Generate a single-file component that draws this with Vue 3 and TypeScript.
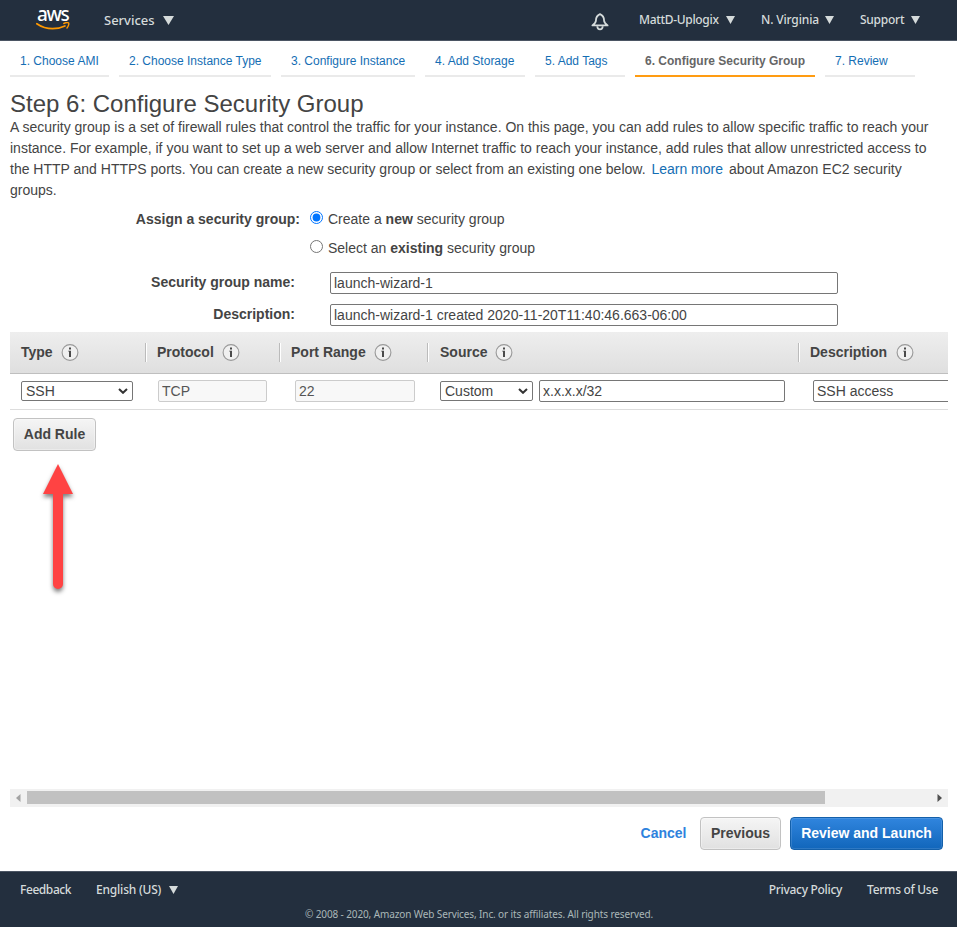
<script setup lang="ts">
import { ref } from 'vue'

interface Tab { label: string; cls: string; active?: boolean }
const tabs: Tab[] = [
  { label: '1. Choose AMI', cls: 't1' },
  { label: '2. Choose Instance Type', cls: 't2' },
  { label: '3. Configure Instance', cls: 't3' },
  { label: '4. Add Storage', cls: 't4' },
  { label: '5. Add Tags', cls: 't5' },
  { label: '6. Configure Security Group', cls: 't6', active: true },
  { label: '7. Review', cls: 't7' },
]
const columns: string[] = ['Type', 'Protocol', 'Port Range', 'Source', 'Description']
const mode = ref<'new' | 'existing'>('new')
const groupName = ref('launch-wizard-1')
const description = ref('launch-wizard-1 created 2020-11-20T11:40:46.663-06:00')
const source = ref('x.x.x.x/32')
const ruleDescription = ref('SSH access')
</script>

<template>
  <div class="page">
    <header class="topbar">
      <div class="logo">
        <span class="logo-text">aws</span>
        <svg class="smile" width="34" height="9" viewBox="0 0 34 9">
          <path d="M.8 1.700C5.500 4.900 10.800 6.700 16.500 6.700c4.300 0 8.800-.9 12.400-2.700" fill="none" stroke="#f90" stroke-width="1.700" stroke-linecap="round" />
          <path d="M27.800 1.500c1.800-.9 4.200-1 4.800-.5.500.6-.1 3.400-1.600 4.900" fill="none" stroke="#f90" stroke-width="1.400" stroke-linecap="round" />
        </svg>
      </div>
      <a class="services"><span>Services</span><svg width="11" height="9" viewBox="0 0 11 9"><path d="M0 0h11L5.500 9z" /></svg></a>
      <svg class="bell" width="18" height="18" viewBox="0 0 18 18" fill="none" stroke="#d5dbdb" stroke-width="1.800">
        <path d="M9 1.200C6.200 2.300 4.900 4.700 4.900 7.800c0 1.700-1.100 2.800-3.500 4.600h15.200c-2.400-1.800-3.500-2.900-3.500-4.600 0-3.100-1.300-5.500-4.100-6.600z" stroke-linejoin="round" />
        <path d="M6.300 13.200c.2 4.200 5.200 4.200 5.400 0" />
      </svg>
      <a class="account"><span>MattD-Uplogix</span><svg width="9" height="8" viewBox="0 0 9 8"><path d="M0 0h9L4.500 8z" /></svg></a>
      <a class="region"><span>N. Virginia</span><svg width="9" height="8" viewBox="0 0 9 8"><path d="M0 0h9L4.500 8z" /></svg></a>
      <a class="support"><span>Support</span><svg width="9" height="8" viewBox="0 0 9 8"><path d="M0 0h9L4.500 8z" /></svg></a>
    </header>

    <nav class="tabs">
      <a v-for="t in tabs" :key="t.label" :class="['tab', t.cls, { active: t.active }]">{{ t.label }}</a>
    </nav>

    <main class="content">
      <h1>Step 6: Configure Security Group</h1>
      <p class="intro">
        <span class="l1">A security group is a set of firewall rules that control the traffic for your instance. On this page, you can add rules to allow specific traffic to reach your</span>
        <span class="l2">instance. For example, if you want to set up a web server and allow Internet traffic to reach your instance, add rules that allow unrestricted access to</span>
        <span class="l3">the HTTP and HTTPS ports. You can create a new security group or select from an existing one below. <a>Learn more</a> about Amazon EC2 security</span>
        <span class="l4">groups.</span>
      </p>

      <div class="form">
        <div class="assign">
          <span class="label">Assign a security group:</span>
          <div class="radios">
            <label><input v-model="mode" type="radio" value="new"><span>Create a <b>new</b> security group</span></label>
            <label><input v-model="mode" type="radio" value="existing"><span>Select an <b>existing</b> security group</span></label>
          </div>
        </div>
        <div class="field">
          <span class="label">Security group name:</span>
          <input v-model="groupName" class="text" type="text">
        </div>
        <div class="field">
          <span class="label">Description:</span>
          <input v-model="description" class="text" type="text">
        </div>
      </div>

      <section class="rules">
        <div class="head">
          <div v-for="c in columns" :key="c" class="th">
            <span>{{ c }}</span>
            <svg width="18" height="18" viewBox="0 0 18 18">
              <circle cx="9" cy="9.500" r="7.900" fill="#f0f0f0" stroke="#999" stroke-width="1.100" />
              <path d="M8 4.500h2v2H8zM7.200 7.700H10V14H8V8.600h-.8z" fill="#4a4a4a" />
            </svg>
          </div>
        </div>
        <div class="row">
          <div class="select type"><span>SSH</span><svg width="10" height="6" viewBox="0 0 10 6"><path d="M1 1l4 3.800L9 1" /></svg></div>
          <input class="text protocol" type="text" value="TCP" disabled>
          <input class="text port" type="text" value="22" disabled>
          <div class="select origin"><span>Custom</span><svg width="10" height="6" viewBox="0 0 10 6"><path d="M1 1l4 3.800L9 1" /></svg></div>
          <input v-model="source" class="text source" type="text">
          <input v-model="ruleDescription" class="text desc" type="text">
        </div>
        <button class="btn add">Add Rule</button>
        <svg class="arrow" width="50" height="150" viewBox="0 0 50 150">
          <path d="M25 9L40 39H30v90a5 5 0 0 1-10 0V39H10z" fill="#ff4343" />
        </svg>
      </section>

      <div class="scrollbar">
        <svg width="5" height="8" viewBox="0 0 5 8"><path d="M4.500 0v8L0 4z" fill="#a3a3a3" /></svg>
        <div class="thumb"></div>
        <svg class="right" width="5" height="8" viewBox="0 0 5 8"><path d="M.5 0v8L5 4z" fill="#505050" /></svg>
      </div>

      <div class="actions">
        <a class="cancel">Cancel</a>
        <button class="btn previous">Previous</button>
        <button class="btn primary">Review and Launch</button>
      </div>
    </main>

    <footer class="footer">
      <div class="links">
        <a class="feedback">Feedback</a>
        <a class="language"><span>English (US)</span><svg width="9" height="8" viewBox="0 0 9 8"><path d="M0 0h9L4.500 8z" /></svg></a>
        <a class="privacy">Privacy Policy</a>
        <a class="terms">Terms of Use</a>
      </div>
      <div class="copyright">© 2008 - 2020, Amazon Web Services, Inc. or its affiliates. All rights reserved.</div>
    </footer>
  </div>
</template>

<style>
body { margin: 0; background: #fff; }
</style>

<style scoped>
* { box-sizing: border-box; }
.page { width: 957px; height: 927px; display: flex; flex-direction: column; overflow: hidden; background: #fff; color: #444; font: 14px/21px "Liberation Sans", Arial, sans-serif; }
svg { display: block; flex: none; }
.topbar, .footer { background: #232f3e; color: #d5dbdb; font-family: "Noto Sans", sans-serif; font-weight: 500; }
.topbar { height: 41px; flex: none; display: flex; border-bottom: 1px solid #4b5563; padding-left: 36px; font-size: 12px; line-height: 40px; }
.topbar a, .language { display: flex; align-items: center; white-space: nowrap; }
.topbar a svg, .language svg { fill: #d5dbdb; }
.logo { width: 68px; padding-top: 4px; color: #fff; }
.logo-text { display: block; height: 17px; padding-left: 1px; font: 500 19px/20px "Noto Sans", sans-serif; letter-spacing: -1.300px; }
.smile { margin-top: 1px; }
.services { width: 488px; font-size: 13px; }
.services span { width: 59px; letter-spacing: 0; }
.bell { margin: 13px 30px 0 -1px; }
.account { width: 122px; letter-spacing: -.32px; }
.account span { width: 87px; }
.region { width: 99px; letter-spacing: -.15px; }
.region span { width: 64px; }
.support { letter-spacing: -.25px; }
.support span { width: 51px; }

.tabs { height: 36px; flex: none; display: flex; gap: 10px; padding-left: 10px; font-size: 12px; line-height: 40px; }
.tab { height: 36px; padding-left: 10px; border-bottom: 2px solid #eaeaea; color: #146eb4; white-space: nowrap; }
.tab.active { border-color: #ff9c12; color: #666; font-weight: bold; }
.t1 { width: 99px; }
.t2 { width: 152px; }
.t3 { width: 134px; }
.t4 { width: 100px; }
.t5 { width: 90px; }
.t6 { width: 180px; }
.t7 { width: 90px; }

.content { height: 794px; flex: none; padding: 14px 9px 0 10px; }
h1 { margin: 0 0 1px; font-size: 24px; line-height: 25px; font-weight: normal; }
.intro { margin: 0; height: 84px; }
.intro span { display: block; width: max-content; white-space: nowrap; }
.intro a { color: #146eb4; margin: 0 2px; }
.label { font-weight: bold; text-align: right; white-space: nowrap; }
.assign { display: flex; gap: 10px; padding-top: 8px; }
.assign .label { width: 290px; }
.radios { display: flex; flex-direction: column; gap: 8px; }
.radios label { height: 21px; display: flex; gap: 5px; }
.radios input { width: 13px; height: 13px; margin: 2px 0 0; }
.radios span { white-space: nowrap; }
.field { display: flex; height: 22px; margin-bottom: 10px; gap: 35px; }
.assign + .field { margin-top: 13px; }
.field .label { width: 285px; }
.field .text { width: 508px; }
.text { height: 22px; margin: 0; padding: 0 3px; border: 1px solid #767676; border-radius: 2px; background: #fff; color: #444; font: inherit; outline: 0; }
.text:disabled { background: #f8f8f8; border-color: #ccc; color: #555; }

.rules { height: 457px; margin-top: -4px; width: 938px; overflow: hidden; position: relative; }
.head { display: grid; grid-template-columns: 137px 134px 148px 371px 1fr; height: 42px; border-bottom: 1px solid #bfbfbf; background: linear-gradient(#eee, #dfdfdf); }
.th { height: 19px; margin-top: 11px; display: flex; align-items: flex-start; gap: 8.500px; padding-left: 10px; border-right: 1px solid #fff; box-shadow: inset -1px 0 #bbb; font-weight: bold; line-height: 19px; white-space: nowrap; }
.th:first-child { padding-left: 11px; gap: 8px; }
.th:nth-child(4) { padding-left: 11px; gap: 7.500px; }
.th:last-child { border: 0; box-shadow: none; }
.row { height: 36px; display: flex; align-items: center; padding: 0 0 2px 11px; border-bottom: 1px solid #ddd; }
.row > * { flex: none; }
.select { height: 20px; display: flex; align-items: center; justify-content: space-between; border: 1px solid #767676; border-radius: 2px; padding: 0 4px; line-height: 18px; }
.select path { fill: none; stroke: #333; stroke-width: 2; }
.type { width: 112px; margin-right: 25px; }
.protocol { width: 109px; margin-right: 28px; }
.port { width: 120px; margin-right: 25px; }
.origin { width: 93px; margin-right: 6px; }
.source { width: 246px; margin-right: 28px; }
.desc { width: 240px; }
.btn { height: 33px; padding: 0; border: 1px solid #c2c2c2; border-radius: 4px; background: linear-gradient(#f5f5f5, #e1e1e1); box-shadow: inset 0 0 0 1px rgba(255, 255, 255, .35); color: #444; font: bold 14px/29px "Liberation Sans", Arial, sans-serif; white-space: nowrap; }
.add { display: block; width: 83px; margin: 8px 0 0 3px; }
.arrow { position: absolute; left: 23px; top: 123px; filter: drop-shadow(0 3px 2px rgba(0, 0, 0, .5)); }

.scrollbar { display: flex; align-items: center; width: 938px; height: 18px; padding: 0 6px 1px 6px; background: #f1f1f1; }
.thumb { width: 798px; height: 13px; margin-left: 6px; background: #c1c1c1; }
.right { margin-left: auto; }
.actions { display: flex; align-items: center; justify-content: flex-end; padding: 10px 5px 0 0; }
.cancel { margin-right: 13.500px; color: #2e82dd; font-weight: bold; }
.previous { width: 81px; margin-right: 9px; }
.primary { width: 153px; border-color: #1460aa; background: linear-gradient(#3085de, #1166bb); box-shadow: inset 0 0 0 1px rgba(255, 255, 255, .12); color: #fff; }

.footer { height: 56px; flex: none; border-top: 1px solid #4b5563; font-size: 12px; }
.links { display: flex; padding: 8px 19px 0 20px; line-height: 20px; white-space: nowrap; letter-spacing: -.3px; }
.feedback { width: 76px; letter-spacing: -.42px; }
.language { height: 19px; letter-spacing: -.2px; }
.language span { width: 73px; }
.privacy { margin-left: auto; margin-right: 25px; }
.copyright { padding-left: 305px; color: #aab7b8; font-size: 10px; letter-spacing: -.115px; line-height: 29px; white-space: nowrap; font-weight: 400; }
</style>
